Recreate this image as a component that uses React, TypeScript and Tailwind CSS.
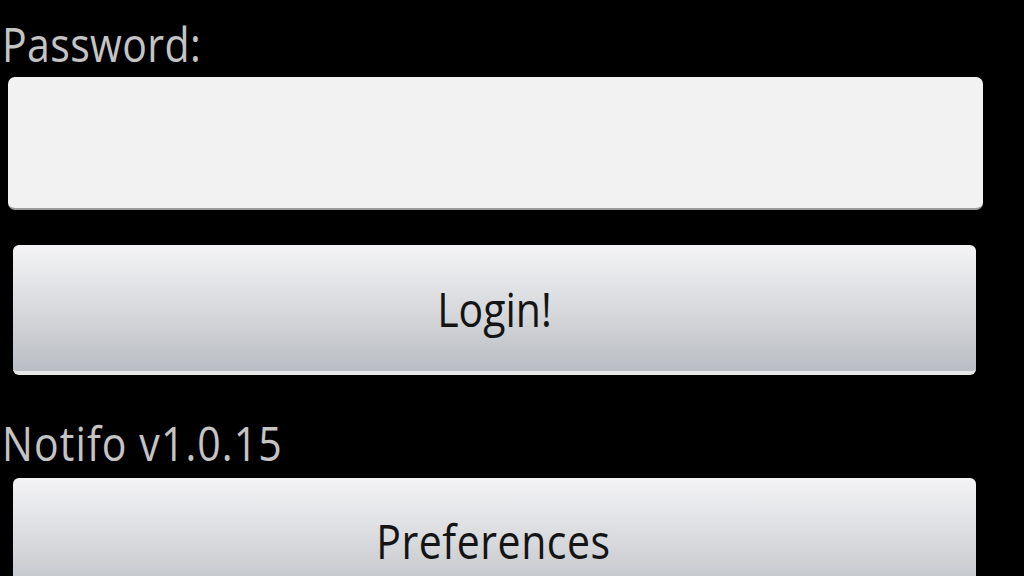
import React from "react";

const font = { fontFamily: '"Open Sans", "Noto Sans", sans-serif' };

export default function App() {
  return (
    <div
      className="w-[1024px] h-[576px] bg-black overflow-hidden flex flex-col pt-[20px]"
      style={font}
    >
      <div className="pl-[2px] h-[48px] leading-[48px] text-[41px] text-[#c4c4c4] scale-y-[1.15] origin-center tracking-[0.4px]">
        Password:
      </div>
      <div className="mt-[9px] ml-[8px] w-[975px] h-[133px] rounded-[7px] bg-[#f2f2f2] border-b-[2px] border-[#9a9a9a] shrink-0" />
      <button className="mt-[35px] ml-[13px] w-[963px] h-[130px] shrink-0 rounded-[6px] bg-gradient-to-b from-[#f4f4f6] via-[#d5d7da] via-55% to-[#b9bdc3] border-b-[4px] border-[#e6e7e9] flex items-center justify-center">
        <span className="h-[48px] leading-[48px] text-[41px] text-[#141414] scale-y-[1.15] mt-[2px]">
          Login!
        </span>
      </button>
      <div className="mt-[44px] pl-[2px] h-[48px] leading-[48px] text-[41px] text-[#c4c4c4] scale-y-[1.15] tracking-[1.1px]">
        Notifo v1.0.15
      </div>
      <button className="mt-[11px] ml-[13px] w-[963px] h-[130px] shrink-0 rounded-[6px] bg-gradient-to-b from-[#f4f4f6] via-[#d5d7da] via-55% to-[#b9bdc3] border-b-[4px] border-[#e6e7e9] flex items-center justify-center">
        <span className="h-[48px] leading-[48px] text-[41px] text-[#141414] scale-y-[1.15] tracking-[0.55px] -ml-[2px]">
          Preferences
        </span>
      </button>
    </div>
  );
}
